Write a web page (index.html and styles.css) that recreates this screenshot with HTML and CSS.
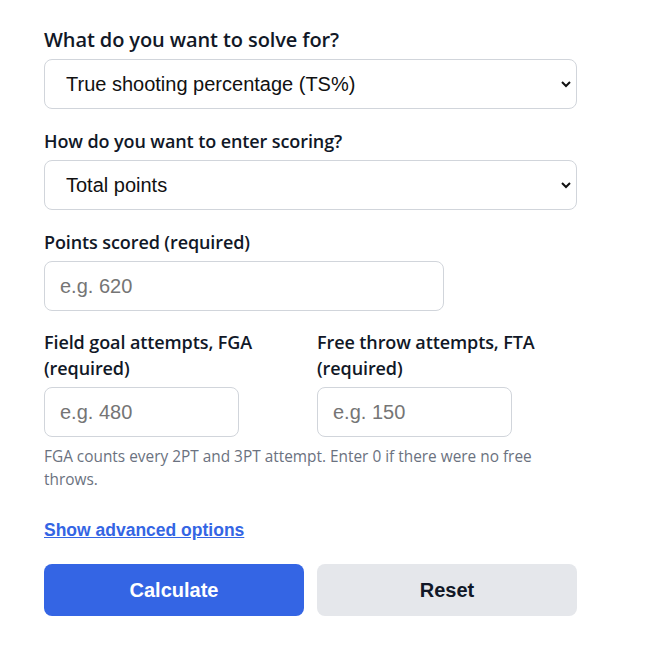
FILE: index.html
```html
<!doctype html>
<html lang="en">

<head>
    <meta charset="utf-8">
    <meta name="viewport" content="width=device-width, initial-scale=1">
    <title>True Shooting Calculator</title>

    <link rel="stylesheet" href="styles.css">

</head>

<body>
    <form class="calc" onsubmit="return false">
        <div class="field">
            <label class="label big" for="solve">What do you want to solve for?</label>
            <div class="select-wrap">
                <select id="solve" class="select">
                    <option>True shooting percentage (TS%)</option>
                </select>
                <svg class="chevron" width="12" height="8" viewBox="0 0 12 8">
                    <path d="M2 2l4 4 4-4" fill="none" stroke="#111" stroke-width="2" />
                </svg>
            </div>
        </div>

        <div class="field">
            <label class="label" for="scoring">How do you want to enter scoring?</label>
            <div class="select-wrap">
                <select id="scoring" class="select">
                    <option>Total points</option>
                </select>
                <svg class="chevron" width="12" height="8" viewBox="0 0 12 8">
                    <path d="M2 2l4 4 4-4" fill="none" stroke="#111" stroke-width="2" />
                </svg>
            </div>
        </div>

        <div class="field">
            <label class="label" for="points">Points scored (required)</label>
            <input id="points" class="input wide" type="text" placeholder="e.g. 620">
        </div>

        <div class="pair">
            <div>
                <label class="label" for="fga">Field goal attempts, FGA (required)</label>
                <input id="fga" class="input" type="text" placeholder="e.g. 480">
            </div>
            <div>
                <label class="label" for="fta">Free throw attempts, FTA (required)</label>
                <input id="fta" class="input" type="text" placeholder="e.g. 150">
            </div>
        </div>

        <p class="hint">FGA counts every 2PT and 3PT attempt. Enter 0 if there were no free throws.</p>

        <a class="advanced" href="#">Show advanced options</a>

        <div class="buttons">
            <button class="btn primary" type="submit">Calculate</button>
            <button class="btn secondary" type="reset">Reset</button>
        </div>
    </form>
</body>

</html>
```

FILE: styles.css
```css
body {
    margin: 0;
    background-color: #ffffff;
    color: #111827;
    font-family: "Open Sans", "Noto Sans", sans-serif;
}

.calc {
    width: 533px;
    padding: 27px 44px;
}

.field {
    margin-bottom: 19px;
}

.label {
    display: block;
    font-size: 18px;
    font-weight: 600;
    line-height: 26px;
    margin-bottom: 6px;
    letter-spacing: -0.1px;
}

.label.big {
    font-size: 20px;
    letter-spacing: -0.1px;
}

.pair .label {
    line-height: 25.5px;
}

.select-wrap {
    position: relative;
}

.select {
    -webkit-appearance: none;
    appearance: none;
    width: 100%;
    height: 50px;
    padding: 0 40px 0 21px;
    border: 1px solid #d1d5db;
    border-radius: 8px;
    background-color: #ffffff;
    color: #111111;
    font-family: "Liberation Sans", Arial, sans-serif;
    font-size: 20px;
}

.chevron {
    position: absolute;
    right: 5px;
    top: 21px;
    pointer-events: none;
}

.input {
    display: block;
    box-sizing: border-box;
    width: 75%;
    height: 50px;
    padding: 0 15px;
    border: 1px solid #d1d5db;
    border-radius: 8px;
    color: #111111;
    font-family: "Liberation Sans", Arial, sans-serif;
    font-size: 20px;
}

.input::placeholder {
    color: #757575;
}

.pair {
    display: grid;
    grid-template-columns: 1fr 1fr;
    column-gap: 13px;
}

.hint {
    max-width: 515px;
    margin: 8px 0 0;
    font-size: 15.4px;
    line-height: 23px;
    color: #6b7280;
}

.advanced {
    display: inline-block;
    margin-top: 27px;
    color: #3465e4;
    font-family: "Liberation Sans", Arial, sans-serif;
    font-size: 17.5px;
    font-weight: bold;
    line-height: 24px;
}

.buttons {
    display: grid;
    grid-template-columns: 1fr 1fr;
    column-gap: 13px;
    margin-top: 22px;
}

.btn {
    height: 52px;
    border: none;
    border-radius: 8px;
    font-family: "Liberation Sans", Arial, sans-serif;
    font-size: 20px;
    font-weight: bold;
}

.primary {
    background-color: #3465e4;
    color: #ffffff;
}

.secondary {
    background-color: #e5e7eb;
    color: #111827;
}
```
